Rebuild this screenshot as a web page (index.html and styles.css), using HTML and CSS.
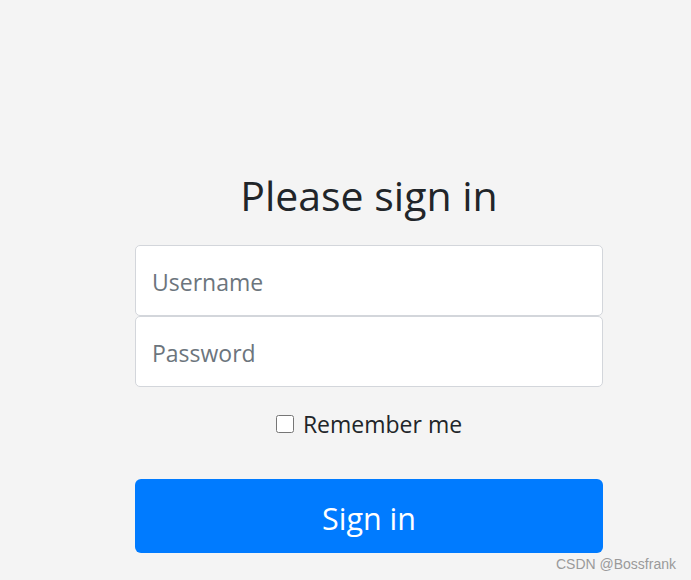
FILE: index.html
```html
<!DOCTYPE html>
<html lang="en">
<head>
<meta charset="utf-8">
<title>Please sign in</title>
<link rel="stylesheet" href="styles.css">
</head>
<body>
<div class="page">
  <form class="form-signin">
    <h2 class="heading">Please sign in</h2>
    <div class="fields">
      <input class="field" type="text" placeholder="Username">
      <input class="field" type="password" placeholder="Password">
    </div>
    <label class="remember"><input class="check" type="checkbox"> Remember me</label>
    <button class="btn" type="button">Sign in</button>
  </form>
</div>
<div class="watermark">CSDN @Bossfrank</div>
</body>
</html>
```
FILE: styles.css
```css
html, body {
  margin: 0;
  height: 100%;
  background: #f4f4f4;
  font-family: "Open Sans", "Noto Sans", sans-serif;
  color: #212529;
  overflow: hidden;
}
.page {
  padding: 166px 0 0 135px;
}
.form-signin {
  width: 468px;
  display: flex;
  flex-direction: column;
}
.heading {
  margin: 0 0 21px;
  font-weight: 400;
  font-size: 41px;
  line-height: 58px;
  text-align: center;
  color: #212529;
}
.fields {
  display: flex;
  flex-direction: column;
}
.field {
  box-sizing: border-box;
  height: 71px;
  margin: 0;
  padding: 2px 16px 0;
  border: 1px solid #d3d6db;
  border-radius: 5px;
  background: #fff;
  font-family: inherit;
  font-size: 23px;
  color: #495057;
  outline: none;
}
.field::placeholder {
  color: #6c757d;
}
.remember {
  display: flex;
  align-items: center;
  justify-content: center;
  gap: 9px;
  margin-top: 22px;
  height: 30px;
  font-size: 23px;
  color: #212529;
}
.check {
  margin: 0;
  width: 18px;
  height: 18px;
}
.btn {
  margin-top: 40px;
  height: 74px;
  border: 0;
  border-radius: 6px;
  background: #007bff;
  color: #fff;
  font-family: inherit;
  font-size: 30.5px;
  padding: 3px 0 0;
}
.watermark {
  position: absolute;
  right: 15px;
  bottom: 8px;
  font-family: "Liberation Sans", Arial, sans-serif;
  font-size: 14px;
  color: #9a9a9a;
}
```
